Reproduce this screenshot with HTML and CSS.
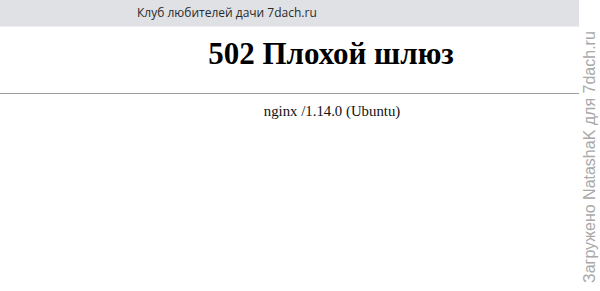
FILE: index.html
```html
<!DOCTYPE html>
<html lang="ru">
  <head>
    <meta charset="UTF-8" />
    <meta name="viewport" content="width=device-width, initial-scale=1.0" />
    <title>502 Плохой шлюз</title>
    <link rel="stylesheet" href="styles.css">
  </head>
  <body>
    <div class="topbar">Клуб любителей дачи 7dach.ru</div>
    <h1 class="centered">502 Плохой шлюз</h1>
    <hr />
    <p class="centered server">nginx /1.14.0 (Ubuntu)</p>
    <div class="watermark">
      <span>Загружено NatashaK для 7dach.ru</span>
    </div>
  </body>
</html>
```

FILE: styles.css
```css
body {
  margin: 0;
  background: #fff;
  font-family: 'Liberation Serif', 'Times New Roman', serif;
  color: #111;
  overflow: hidden;
  position: relative;
  height: 291px;
}
.topbar {
  height: 27px;
  line-height: 25px;
  padding-left: 137px;
  background: #dfe1e5;
  font-family: 'Open Sans', sans-serif;
  font-size: 12px;
  color: #2a2a2a;
  border-bottom: 1px solid #eef0f2;
  box-sizing: border-box;
}
/* the original page was wider, so its centre sits right of ours */
.centered {
  padding-left: 62px;
  text-align: center;
}
h1 {
  margin: 0;
  padding-top: 9px;
  font-size: 31px;
  line-height: 36px;
  font-weight: bold;
  color: #000;
}
hr {
  margin: 21px 0 0;
  border: 0;
  border-top: 1px solid #9c9c9c;
  height: 0;
}
.server {
  margin: 8px 0 0;
  padding-left: 64px;
  font-size: 14.8px;
  line-height: 18px;
}
.watermark {
  position: absolute;
  top: 0;
  right: 0;
  bottom: 0;
  width: 21px;
  background: #fff;
  writing-mode: vertical-rl;
  transform: rotate(180deg);
  font-family: 'Liberation Sans', Arial, sans-serif;
  font-size: 16px;
  line-height: 21px;
  color: #a9a9a9;
  padding-top: 8px;
  box-sizing: border-box;
}
```
